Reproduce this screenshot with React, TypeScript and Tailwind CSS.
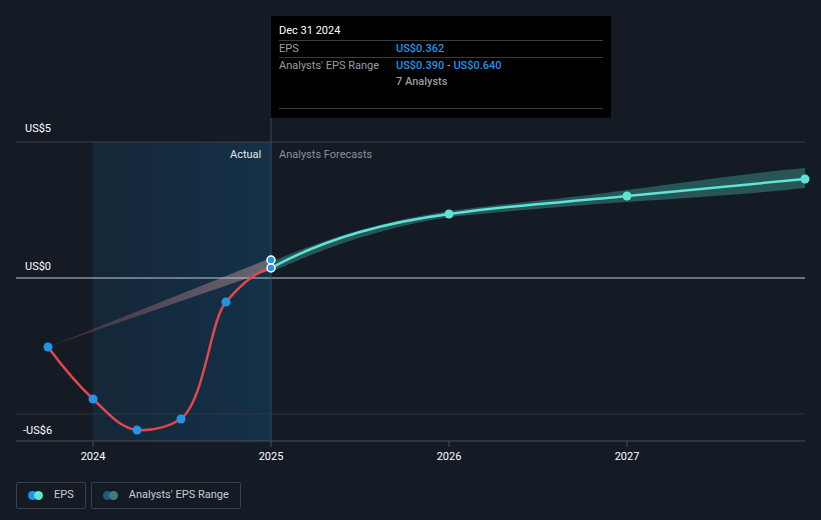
export default function App() {
  const f = { fontFamily: "Roboto, 'Liberation Sans', sans-serif" };
  return (
    <div className="relative w-[821px] h-[520px] bg-[#151b25] overflow-hidden" style={f}>
      <svg className="absolute left-0 top-0" width="821" height="520">
        <defs>
          <linearGradient id="hl" x1="0" x2="1">
            <stop offset="0" stopColor="#14324a" stopOpacity="0.5" />
            <stop offset="1" stopColor="#14324a" stopOpacity="0.95" />
          </linearGradient>
          <linearGradient id="gl" x1="0" x2="1">
            <stop offset="0" stopColor="#ffffff" stopOpacity="0.05" />
            <stop offset="1" stopColor="#ffffff" stopOpacity="0.3" />
          </linearGradient>
        </defs>
        <rect x="93" y="142" width="178" height="299" fill="url(#hl)" />
        <line x1="16" y1="142" x2="805" y2="142" stroke="#3a414b" />
        <line x1="16" y1="414" x2="805" y2="414" stroke="#2e353f" />
        <line x1="16" y1="278" x2="805" y2="278" stroke="#c9ccd1" />
        <line x1="16" y1="441" x2="805" y2="441" stroke="#4a515b" />
        <line x1="271" y1="118" x2="271" y2="441" stroke="#2e4a66" />
        <line x1="93" y1="441" x2="93" y2="447" stroke="#4a515b" />
        <line x1="271" y1="441" x2="271" y2="447" stroke="#4a515b" />
        <line x1="449" y1="441" x2="449" y2="447" stroke="#4a515b" />
        <line x1="627" y1="441" x2="627" y2="447" stroke="#4a515b" />
        <polygon points="48,347 271,258 271,270" fill="url(#gl)" />
        <path d="M48,347 L271,258 L271,270 Z" fill="#c0392b" fillOpacity="0.15" />
        <path d="M271,262 C330,236 390,220 449,211 C520,202 570,198 627,190 C690,182 750,173 805,168 L805,188 C750,194 690,198 627,202 C570,206 520,210 449,217 C390,226 330,245 271,272 Z" fill="#2f6f6b" fillOpacity="0.7" />
        <path d="M48,347 C65,370 78,385 93,399 C108,413 120,428 137,430 C155,431 170,426 181,419 C205,400 210,320 226,302 C240,285 255,272 271,268" fill="none" stroke="#e0484e" strokeWidth="2.5" />
        <path d="M271,268 C330,236 390,222 449,214 C520,204 570,202 627,196 C690,190 750,184 805,179" fill="none" stroke="#5ee3d6" strokeWidth="2.5" />
        {[[48,347],[93,399],[137,430],[181,419],[226,302]].map(([x,y],i)=>(<circle key={i} cx={x} cy={y} r="4.5" fill="#2394e6" />))}
        <circle cx="271" cy="260" r="4" fill="#2394e6" stroke="#fff" strokeWidth="1.5" />
        <circle cx="271" cy="268" r="4" fill="#2394e6" stroke="#fff" strokeWidth="1.5" />
        {[[449,214],[627,196],[805,179]].map(([x,y],i)=>(<circle key={i} cx={x} cy={y} r="4.5" fill="#5ee3d6" />))}
      </svg>
      <div className="absolute left-[25px] top-[121px] text-[11px] text-white">US$5</div>
      <div className="absolute left-[25px] top-[259px] text-[11px] text-white">US$0</div>
      <div className="absolute left-[23px] top-[423px] text-[11px] text-white">-US$6</div>
      <div className="absolute left-[230px] top-[147px] text-[11px] text-[#e6e6e6]">Actual</div>
      <div className="absolute left-[279px] top-[147px] text-[11px] text-[#8b9098]">Analysts Forecasts</div>
      {[["2024",93],["2025",271],["2026",449],["2027",627]].map(([t,x])=>(
        <div key={t} className="absolute top-[449px] text-[11px] text-white w-[40px] text-center" style={{left:(x as number)-20}}>{t}</div>
      ))}
      <div className="absolute left-[271px] top-[16px] w-[340px] h-[102px] bg-black px-[8px] pt-[7px] text-[11px]">
        <div className="text-white h-[17px]">Dec 31 2024</div>
        <div className="border-t border-[#3a3a3a] flex h-[17px] items-center">
          <span className="w-[117px] text-[#9a9ea4]">EPS</span><span className="text-[#2394e6] font-medium">US$0.362</span>
        </div>
        <div className="border-t border-[#3a3a3a] flex h-[17px] items-center">
          <span className="w-[117px] text-[#9a9ea4]">Analysts' EPS Range</span><span className="text-[#2394e6] font-medium">US$0.390 <span className="text-[#9a9ea4]">-</span> US$0.640</span>
        </div>
        <div className="flex h-[17px] items-center"><span className="w-[117px]" /><span className="text-[#9a9ea4] font-medium">7 Analysts</span></div>
        <div className="border-t border-[#3a3a3a] mt-[17px]" />
      </div>
      <div className="absolute left-[16px] top-[482px] flex gap-[5px] text-[11px] text-[#c9ccd1]">
        <div className="h-[27px] px-[11px] border border-[#3a414b] rounded-[2px] flex items-center gap-[10px]">
          <span className="relative w-[16px] h-[9px]"><span className="absolute left-0 w-[9px] h-[9px] rounded-full bg-[#2394e6]" /><span className="absolute left-[6px] w-[9px] h-[9px] rounded-full bg-[#5ee3d6]" /></span>EPS
        </div>
        <div className="h-[27px] px-[11px] border border-[#3a414b] rounded-[2px] flex items-center gap-[10px]">
          <span className="relative w-[16px] h-[9px]"><span className="absolute left-0 w-[9px] h-[9px] rounded-full bg-[#1d5a87]" /><span className="absolute left-[6px] w-[9px] h-[9px] rounded-full bg-[#3e7f7a]" /></span>Analysts' EPS Range
        </div>
      </div>
    </div>
  );
}
